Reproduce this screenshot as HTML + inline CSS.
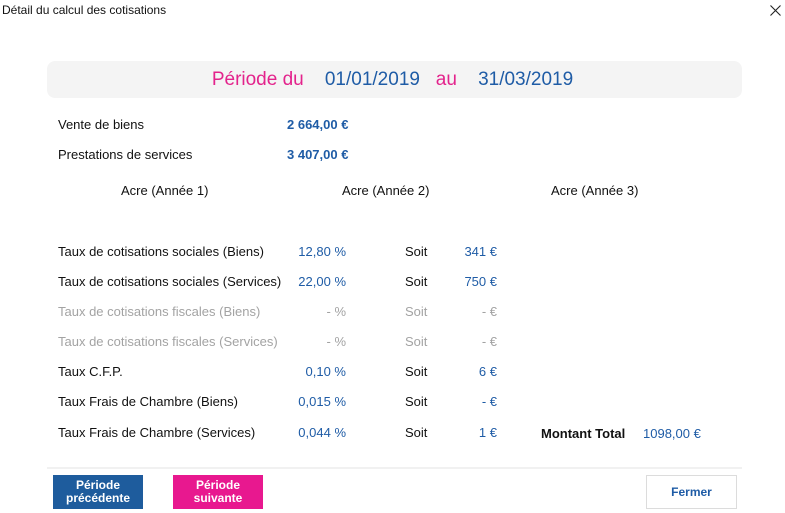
<!DOCTYPE html>
<html><head><meta charset="utf-8"><style>
body{margin:0;width:785px;height:513px;background:#fff;font-family:"Liberation Sans",Arial,sans-serif;font-size:13px;color:#111;position:relative;overflow:hidden}
.a{position:absolute;white-space:nowrap;line-height:14px}
.b{color:#1f5ca6}.g{color:#a3a3a3}.r{text-align:right}
.btn{position:absolute;top:475px;height:34px;width:90px;color:#fff;font-weight:bold;font-size:12px;line-height:13px;display:flex;align-items:center;justify-content:center;text-align:center}
</style></head><body>
<div class="a" style="left:2px;top:3px;font-size:12px">Détail du calcul des cotisations</div>
<svg style="position:absolute;left:770px;top:5px" width="11" height="11"><path d="M0.5 0.5L10.5 10.5M10.5 0.5L0.5 10.5" stroke="#222" stroke-width="1.1"/></svg>
<div style="position:absolute;left:47px;top:61px;width:695px;height:37px;background:#f4f4f4;border-radius:8px"></div>
<div class="a" style="left:0;width:785px;top:69px;text-align:center;font-size:19px;line-height:22px"><span style="color:#e3238c">Période du</span>&nbsp;&nbsp;&nbsp;&nbsp;<span class="b">01/01/2019</span>&nbsp;&nbsp;&nbsp;<span style="color:#e3238c">au</span>&nbsp;&nbsp;&nbsp;&nbsp;<span class="b">31/03/2019</span></div>
<div class="a" style="left:58px;top:118px">Vente de biens</div>
<div class="a b" style="left:287px;top:118px;font-weight:bold">2 664,00 €</div>
<div class="a" style="left:58px;top:148px">Prestations de services</div>
<div class="a b" style="left:287px;top:148px;font-weight:bold">3 407,00 €</div>
<div class="a" style="left:121px;top:184px">Acre (Année 1)</div>
<div class="a" style="left:342px;top:184px">Acre (Année 2)</div>
<div class="a" style="left:551px;top:184px">Acre (Année 3)</div>

<div class="a" style="left:58px;top:245px">Taux de cotisations sociales (Biens)</div>
<div class="a b r" style="left:246px;width:100px;top:245px">12,80 %</div>
<div class="a" style="left:405px;top:245px">Soit</div>
<div class="a b r" style="left:437px;width:60px;top:245px">341 €</div>

<div class="a" style="left:58px;top:275px">Taux de cotisations sociales (Services)</div>
<div class="a b r" style="left:246px;width:100px;top:275px">22,00 %</div>
<div class="a" style="left:405px;top:275px">Soit</div>
<div class="a b r" style="left:437px;width:60px;top:275px">750 €</div>

<div class="a g" style="left:58px;top:305px">Taux de cotisations fiscales (Biens)</div>
<div class="a g r" style="left:246px;width:100px;top:305px">- %</div>
<div class="a g" style="left:405px;top:305px">Soit</div>
<div class="a g r" style="left:437px;width:60px;top:305px">- €</div>

<div class="a g" style="left:58px;top:335px">Taux de cotisations fiscales (Services)</div>
<div class="a g r" style="left:246px;width:100px;top:335px">- %</div>
<div class="a g" style="left:405px;top:335px">Soit</div>
<div class="a g r" style="left:437px;width:60px;top:335px">- €</div>

<div class="a" style="left:58px;top:365px">Taux C.F.P.</div>
<div class="a b r" style="left:246px;width:100px;top:365px">0,10 %</div>
<div class="a" style="left:405px;top:365px">Soit</div>
<div class="a b r" style="left:437px;width:60px;top:365px">6 €</div>

<div class="a" style="left:58px;top:395px">Taux Frais de Chambre (Biens)</div>
<div class="a b r" style="left:246px;width:100px;top:395px">0,015 %</div>
<div class="a" style="left:405px;top:395px">Soit</div>
<div class="a b r" style="left:437px;width:60px;top:395px">- €</div>

<div class="a" style="left:58px;top:426px">Taux Frais de Chambre (Services)</div>
<div class="a b r" style="left:246px;width:100px;top:426px">0,044 %</div>
<div class="a" style="left:405px;top:426px">Soit</div>
<div class="a b r" style="left:437px;width:60px;top:426px">1 €</div>
<div class="a" style="left:541px;top:427px;font-weight:bold">Montant Total</div>
<div class="a b" style="left:643px;top:427px">1098,00 €</div>

<div style="position:absolute;left:47px;top:467px;width:695px;height:2px;background:#f1f1f1"></div>
<div class="btn" style="left:53px;background:#1e5c9d">Période<br>précédente</div>
<div class="btn" style="left:173px;background:#e8188f">Période<br>suivante</div>
<div class="btn" style="left:646px;width:89px;height:32px;background:#fff;border:1px solid #dcdcdc;color:#1f5ca6">Fermer</div>
</body></html>
